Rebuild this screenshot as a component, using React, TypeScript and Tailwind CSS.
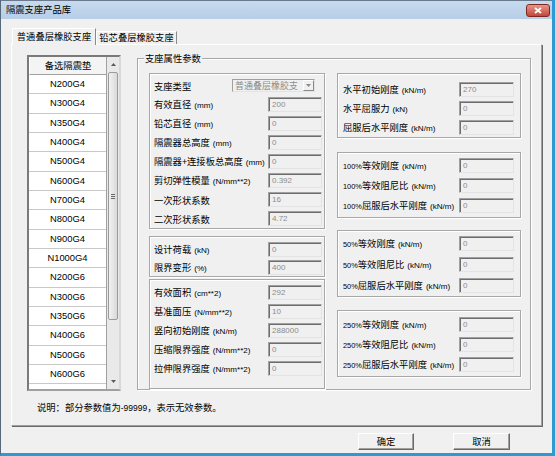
import React from 'react';

const cjk = "font-['Noto_Sans_CJK_SC',sans-serif]";
const lat = "font-['Liberation_Sans',Arial,sans-serif]";

const LIST = [
  'N200G4', 'N300G4', 'N350G4', 'N400G4', 'N500G4', 'N600G4', 'N700G4', 'N800G4', 'N900G4',
  'N1000G4', 'N200G6', 'N300G6', 'N350G6', 'N400G6', 'N500G6', 'N600G6', 'N700G6',
];

function Label({ pre, text, unit }: { pre?: string; text: string; unit?: string }) {
  return (
    <span className="whitespace-nowrap text-black leading-none flex items-baseline pt-[2px]">
      {pre && <span className={`${lat} text-[7.4px]`}>{pre}</span>}
      <span className={`${cjk} text-[9.3px]`}>{text}</span>
      {unit && <span className={`${lat} text-[8.1px] ml-[3px]`}>{unit}</span>}
    </span>
  );
}

function Box({ value, w }: { value: string; w: string }) {
  return (
    <div
      className={`${w} h-[15px] shrink-0 border border-t-[#a0a0a0] border-l-[#a0a0a0] border-b-[#e3e3e3] border-r-[#e3e3e3] shadow-[inset_1px_1px_0_#6d6d6d] bg-[#f0f0f0] pl-[3px] pt-[1px] ${lat} text-[8px] leading-[11px] text-[#8c8c8c]`}
    >
      {value}
    </div>
  );
}

type F = { pre?: string; text: string; unit?: string; value: string };

function Rows({ items, h, w }: { items: F[]; h: string; w: string }) {
  return (
    <>
      {items.map((f) => (
        <div key={(f.pre ?? '') + f.text} className={`${h} flex items-center justify-between`}>
          <Label pre={f.pre} text={f.text} unit={f.unit} />
          <Box value={f.value} w={w} />
        </div>
      ))}
    </>
  );
}

const etched = 'border border-[#a8a8a8] shadow-[inset_1px_1px_0_#ffffff,1px_1px_0_#ffffff]';

function ListBox() {
  return (
    <div className="w-[94px] h-[336px] shrink-0 flex border-2 border-t-[#7a7a7a] border-l-[#7a7a7a] border-b-[#a0a0a0] border-r-[#d8d8d8] bg-white overflow-hidden">
      <div className="flex-1 flex flex-col border-r border-[#a0a0a0] overflow-hidden">
        <div className={`h-[18px] shrink-0 flex items-center justify-center bg-[#f4f4f4] border-b border-[#a0a0a0] border-l border-l-white ${cjk} text-[9.3px] text-black`}>
          备选隔震垫
        </div>
        {LIST.map((n) => (
          <div
            key={n}
            className={`h-[19.33px] shrink-0 flex items-center justify-center bg-white border-b border-[#c8c8c8] ${lat} text-[9.4px] text-black`}
          >
            {n}
          </div>
        ))}
      </div>
      {/* scrollbar */}
      <div className="w-[12px] shrink-0 flex flex-col bg-[#e9e9e9]">
        <div className="h-[15px] flex items-center justify-center">
          <svg width="5" height="3" viewBox="0 0 5 3"><path d="M0 3 L2.5 0 L5 3 Z" fill="#5a5a5a" /></svg>
        </div>
        <div className="h-[248px] mx-[1px] rounded-[2px] border border-[#9a9a9a] bg-gradient-to-r from-[#f2f2f2] to-[#d9d9d9] flex items-center justify-center">
          <div className="flex flex-col gap-[1px]">
            <div className="w-[4px] h-[1px] bg-[#6a6a6a]" />
            <div className="w-[4px] h-[1px] bg-[#6a6a6a]" />
            <div className="w-[4px] h-[1px] bg-[#6a6a6a]" />
          </div>
        </div>
        <div className="flex-1" />
        <div className="h-[15px] flex items-center justify-center">
          <svg width="5" height="3" viewBox="0 0 5 3"><path d="M0 0 L2.5 3 L5 0 Z" fill="#5a5a5a" /></svg>
        </div>
      </div>
    </div>
  );
}

export default function App() {
  const lw = 'w-[54px]';
  const rw = 'w-[55px]';
  return (
    <div className="w-[555px] h-[456px] bg-[#f0f0f0] flex flex-col border-l border-l-[#56687a] border-r-[3px] border-r-[#2d9bd3] border-b-[3px] border-b-[#2d9bd3] overflow-hidden">
      {/* title bar */}
      <div className="h-[19px] shrink-0 flex items-center justify-between pl-[5px] pr-[2px] border-t border-[#6a7a8c] bg-gradient-to-b from-[#c6daef] to-[#b7cee7]">
        <span className={`${cjk} text-[9.3px] text-black`}>隔震支座产品库</span>
        <div className="w-[24px] h-[13px] rounded-[3px] border border-[#7e2a22] bg-gradient-to-b from-[#e5958a] to-[#c2463a] flex items-center justify-center">
          <svg width="8" height="7" viewBox="0 0 8 7">
            <path d="M1 1 L7 6 M7 1 L1 6" stroke="#ffffff" strokeWidth="1.8" />
          </svg>
        </div>
      </div>

      <div className="flex-1 flex flex-col px-[10px]">
        {/* tabs */}
        <div className="mt-[9px] h-[16px] flex items-end pl-[1px] relative z-10">
          <div className={`h-[17px] -mb-[1px] w-[84px] flex items-center justify-center border-t border-l border-white border-r border-r-[#8a8a8a] bg-[#f0f0f0] ${cjk} text-[9.3px] text-black`}>
            普通叠层橡胶支座
          </div>
          <div className={`h-[13px] w-[81px] flex items-center justify-center border-t border-l border-white border-r border-r-[#8a8a8a] ${cjk} text-[9.3px] text-black`}>
            铅芯叠层橡胶支座
          </div>
        </div>

        {/* tab panel */}
        <div className="h-[382px] shrink-0 flex flex-col border border-t-white border-l-white border-r-[#a0a0a0] border-b-[#a0a0a0] shadow-[1px_1px_0_#696969] pl-[15px] pr-[10px] pt-[10px]">
          <div className="flex items-start">
            <ListBox />
            <div className={`relative ml-[16px] mt-[3px] w-[394px] h-[332px] ${etched} flex pl-[11px] pr-[9px] pt-[14px]`}>
              <span className={`absolute -top-[7px] left-[6px] px-[1px] bg-[#f0f0f0] ${cjk} text-[9.3px] leading-[12px] text-black`}>
                支座属性参数
              </span>

              {/* left column */}
              <div className="w-[176px] flex flex-col">
                <div className={`${etched} pl-[4px] pr-[2px] pt-[2px]`}>
                  <div className="h-[19px] flex items-center justify-between">
                    <Label text="支座类型" />
                    <div className="mr-[7px] w-[83px] h-[13px] flex border border-t-[#a0a0a0] border-l-[#a0a0a0] border-b-[#e3e3e3] border-r-[#e3e3e3] bg-[#f0f0f0]">
                      <span className={`flex-1 pl-[2px] ${cjk} text-[9px] leading-[12px] text-[#8c8c8c] whitespace-nowrap`}>
                        普通叠层橡胶支
                      </span>
                      <div className="w-[11px] border border-t-white border-l-white border-b-[#8a8a8a] border-r-[#8a8a8a] flex items-center justify-center">
                        <svg width="5" height="3" viewBox="0 0 5 3"><path d="M0 0 L2.5 3 L5 0 Z" fill="#8a8a8a" /></svg>
                      </div>
                    </div>
                  </div>
                  <Rows
                    h="h-[19px]"
                    w={lw}
                    items={[
                      { text: '有效直径', unit: '(mm)', value: '200' },
                      { text: '铅芯直径', unit: '(mm)', value: '0' },
                      { text: '隔震器总高度', unit: '(mm)', value: '0' },
                      { text: '隔震器+连接板总高度', unit: '(mm)', value: '0' },
                      { text: '剪切弹性模量', unit: '(N/mm**2)', value: '0.392' },
                      { text: '一次形状系数', value: '16' },
                      { text: '二次形状系数', value: '4.72' },
                    ]}
                  />
                </div>
                <div className={`mt-[7px] ${etched} pl-[4px] pr-[2px] pt-[3px]`}>
                  <Rows
                    h="h-[18px]"
                    w={lw}
                    items={[
                      { text: '设计荷载', unit: '(kN)', value: '0' },
                      { text: '限界变形', unit: '(%)', value: '400' },
                    ]}
                  />
                </div>
                <div className={`mt-[2px] ${etched} pl-[4px] pr-[2px] pt-[3px] pb-[10px]`}>
                  <Rows
                    h="h-[19px]"
                    w={lw}
                    items={[
                      { text: '有效面积', unit: '(cm**2)', value: '292' },
                      { text: '基准面压', unit: '(N/mm**2)', value: '10' },
                      { text: '竖向初始刚度', unit: ' (kN/m)', value: '288000' },
                      { text: '压缩限界强度', unit: '(N/mm**2)', value: '0' },
                      { text: '拉伸限界强度', unit: '(N/mm**2)', value: '0' },
                    ]}
                  />
                </div>
              </div>

              {/* right column */}
              <div className="ml-[12px] w-[184px] flex flex-col">
                <div className={`${etched} pl-[5px] pr-[6px] pt-[6px]`}>
                  <Rows
                    h="h-[19px]"
                    w={rw}
                    items={[
                      { text: '水平初始刚度', unit: '(kN/m)', value: '270' },
                      { text: '水平屈服力', unit: '(kN)', value: '0' },
                      { text: '屈服后水平刚度', unit: '(kN/m)', value: '0' },
                    ]}
                  />
                </div>
                <div className={`mt-[14px] ${etched} pl-[5px] pr-[6px] pt-[2px] pb-[2px]`}>
                  <Rows
                    h="h-[20px]"
                    w={rw}
                    items={[
                      { pre: '100%', text: '等效刚度', unit: '(kN/m)', value: '0' },
                      { pre: '100%', text: '等效阻尼比', unit: '(kN/m)', value: '0' },
                      { pre: '100%', text: '屈服后水平刚度', unit: '(kN/m)', value: '0' },
                    ]}
                  />
                </div>
                <div className={`mt-[12px] ${etched} pl-[5px] pr-[6px] pt-[2px]`}>
                  <Rows
                    h="h-[21px]"
                    w={rw}
                    items={[
                      { pre: '50%', text: '等效刚度', unit: '(kN/m)', value: '0' },
                      { pre: '50%', text: '等效阻尼比', unit: '(kN/m)', value: '0' },
                      { pre: '50%', text: '屈服后水平刚度', unit: '(kN/m)', value: '0' },
                    ]}
                  />
                </div>
                <div className={`mt-[13px] ${etched} pl-[5px] pr-[6px] pt-[3px] pb-[2px]`}>
                  <Rows
                    h="h-[20px]"
                    w={rw}
                    items={[
                      { pre: '250%', text: '等效刚度', unit: '(kN/m)', value: '0' },
                      { pre: '250%', text: '等效阻尼比', unit: '(kN/m)', value: '0' },
                      { pre: '250%', text: '屈服后水平刚度', unit: '(kN/m)', value: '0' },
                    ]}
                  />
                </div>
              </div>
            </div>
          </div>

          <div className={`mt-[11px] ml-[10px] h-[12px] flex items-center ${cjk} text-[9.3px] text-black`}>
            说明：部分参数值为<span className={`${lat} text-[8.5px]`}>-99999</span>，表示无效参数。
          </div>
        </div>

        {/* buttons */}
        <div className="mt-[7px] flex justify-end gap-[39px] pr-[32px]">
          <button className={`w-[56px] h-[17px] border border-t-white border-l-white border-b-[#696969] border-r-[#696969] shadow-[inset_-1px_-1px_0_#a0a0a0] bg-[#f0f0f0] ${cjk} text-[9.3px] leading-none text-black`}>
            确定
          </button>
          <button className={`w-[57px] h-[17px] border border-t-white border-l-white border-b-[#696969] border-r-[#696969] shadow-[inset_-1px_-1px_0_#a0a0a0] bg-[#f0f0f0] ${cjk} text-[9.3px] leading-none text-black`}>
            取消
          </button>
        </div>
      </div>
    </div>
  );
}
